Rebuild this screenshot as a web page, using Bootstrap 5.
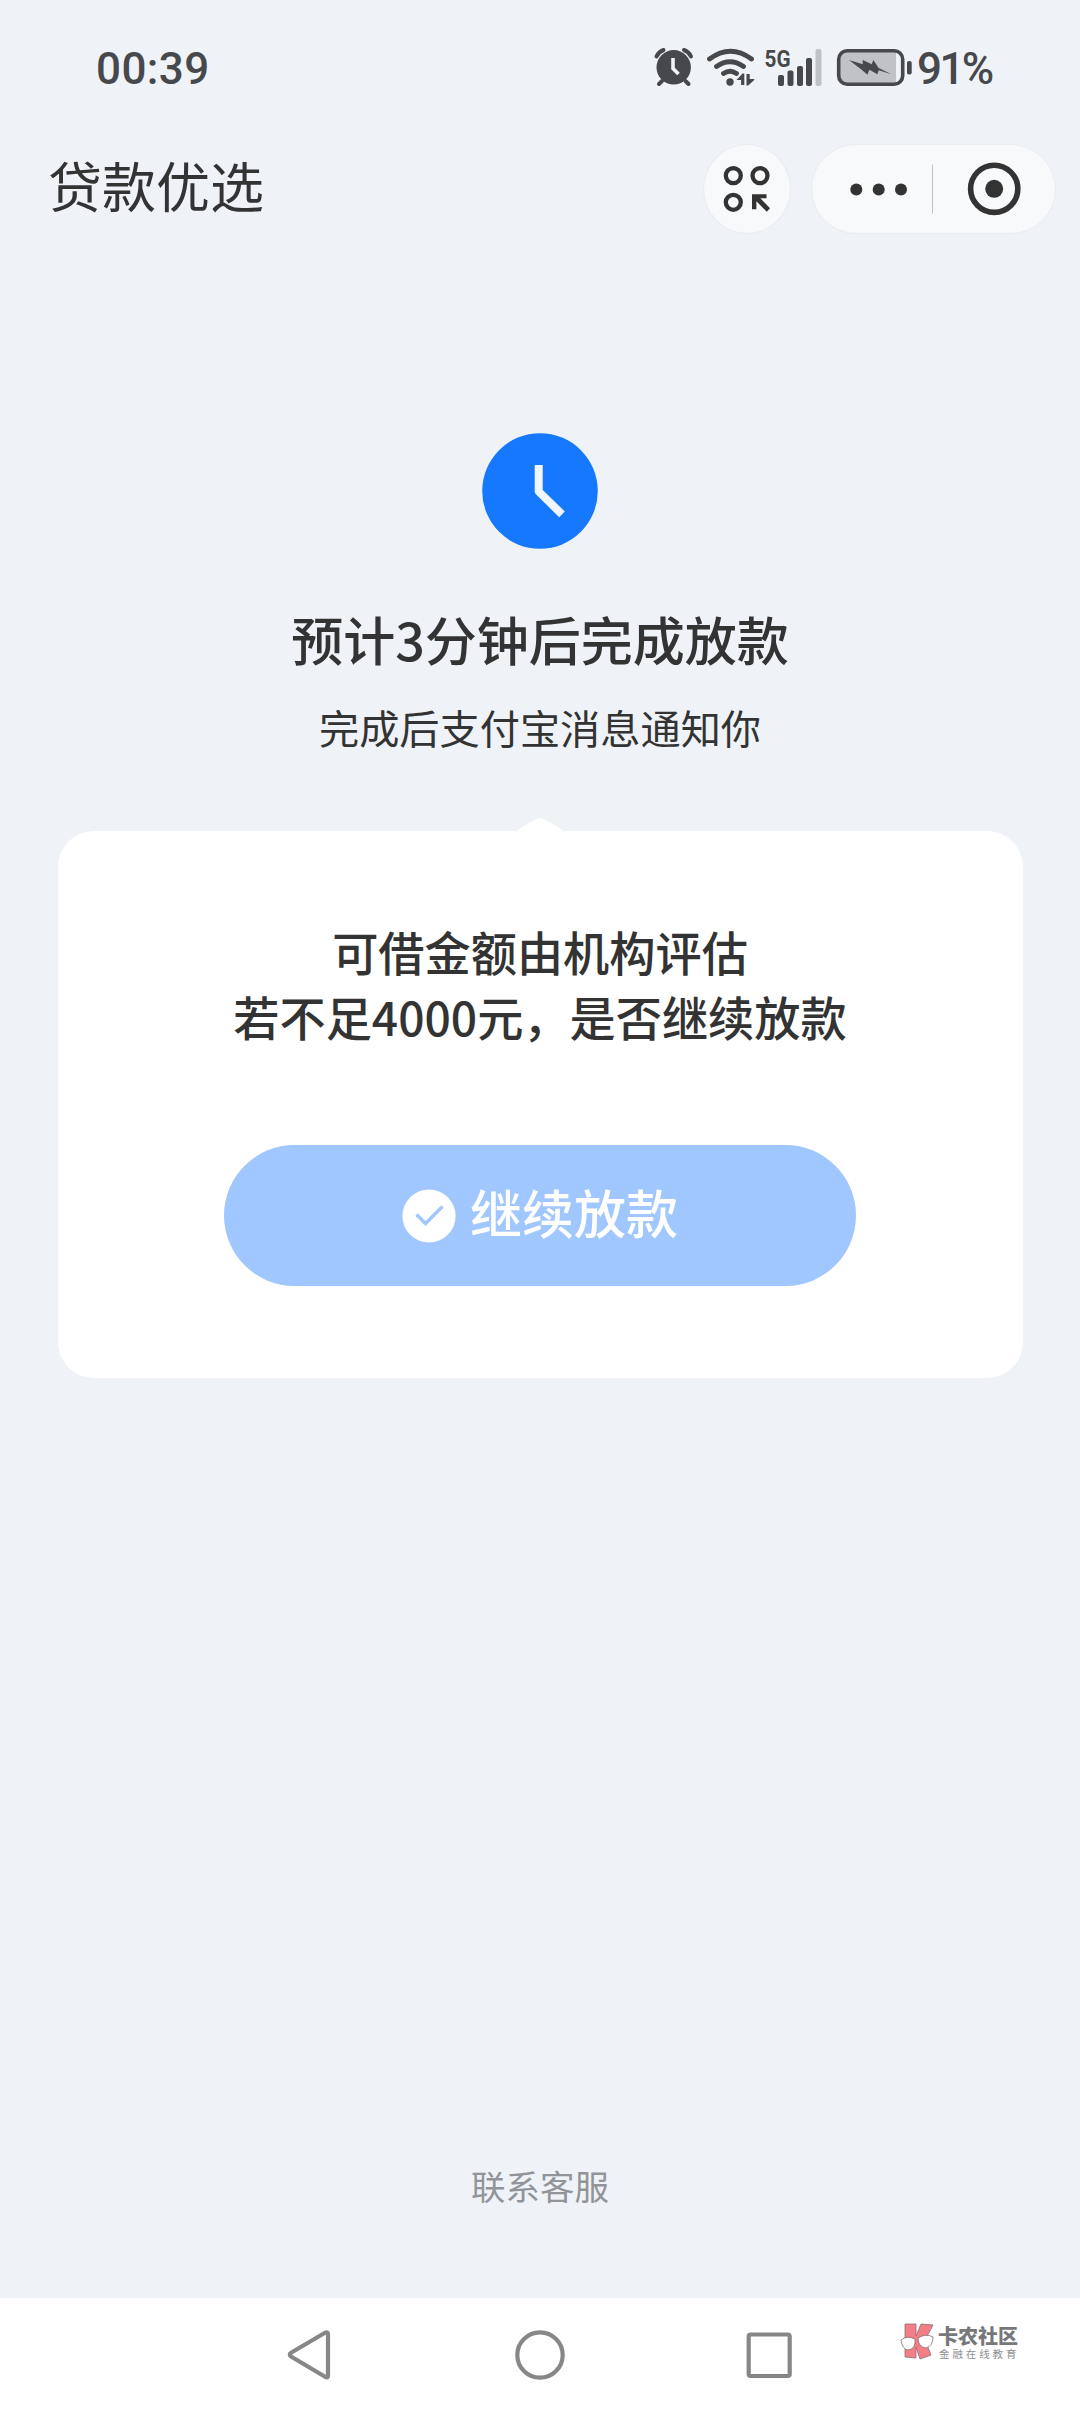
<!DOCTYPE html>
<html lang="zh-CN">
<head>
<meta charset="utf-8">
<meta name="viewport" content="width=device-width, initial-scale=1">
<title>贷款优选</title>
<link href="https://cdn.jsdelivr.net/npm/bootstrap@5.3.0/dist/css/bootstrap.min.css" rel="stylesheet">
<style>
  body { background: #eff3f8; color: #333; font-family: "Noto Sans CJK SC", sans-serif; overflow: hidden; }
  svg { display: block; flex: none; }
  .screen { width: 1080px; height: 2412px; }
  .status { height: 136px; padding: 0 87px 0 96px; color: #47484b; font: 500 44px/1 Roboto, sans-serif; letter-spacing: .4px; }
  .status .clock, .status .pct { padding-top: 2px; }
  .status .pct { letter-spacing: -2.6px; margin-left: 4px; width: 76px; white-space: nowrap; }
  .titlebar { height: 106px; padding: 0 24px 0 48px; }
  .titlebar h1 { font-size: 54px; line-height: 80px; font-weight: 400; color: #333; padding-bottom: 8px; }
  .pill { background: #f7f9fa; border: 1px solid #e9ebef; height: 90px; }
  .pill-round { width: 88px; margin-right: 20px; }
  .pill-wide { width: 245px; }
  .hero { padding-top: 191px; }
  .hero h2 { font-size: 52px; line-height: 76px; font-weight: 500; margin-top: 52px; }
  .hero p { font-size: 40.2px; line-height: 60px; margin-top: 20px; }
  .ask { margin: 74px 57.5px 0; height: 547px; border: 0; border-radius: 36px; padding-top: 87px; }
  .ask .notch { top: -14px; left: 456.5px; }
  .ask p { font-size: 46.2px; line-height: 65px; font-weight: 500; }
  .btn-go, .btn-go:disabled { width: 632px; height: 141px; margin-top: 97px; background: #a0c7ff; color: #fff; font-size: 52px; font-weight: 500; opacity: 1; border: 0; gap: 14px; }
  .btn-go span { line-height: 76px; margin-top: -8px; }
  .service { font-size: 34.5px; line-height: 50px; color: #929498; text-decoration: none; margin-bottom: 88px; }
  .sysnav { height: 114px; background: #fff; }
  .wm { left: 899px; top: 25px; gap: 3px; }
  .wm-name { font-size: 20px; line-height: 22px; font-weight: 900; color: #77787b; margin-top: 2px; }
  .wm-sub { font-size: 10.5px; line-height: 12px; letter-spacing: 2.9px; color: #8e8f92; margin-top: 1px; padding-left: 1px; white-space: nowrap; }
</style>
</head>
<body>
<div class="screen d-flex flex-column">
  <div class="status d-flex align-items-center justify-content-between">
    <span class="clock">00:39</span>
    <div class="d-flex align-items-center">
      <svg width="260" height="44" viewBox="653 46 260 44" fill="#47484b">
        <!-- alarm -->
        <circle cx="673.7" cy="67.3" r="17.2"/>
        <path d="M656.5 56.500a12 12 0 0 1 7-6.500M691 56.500a12 12 0 0 0-7-6.500M662 81l-3 3M685.500 81l3 3" fill="none" stroke="#47484b" stroke-width="4" stroke-linecap="round"/>
        <path d="M673 58v10.500l5.500 5.500" fill="none" stroke="#eff3f8" stroke-width="3.600"/>
        <!-- wifi -->
        <path d="M709.500 59Q730.500 43.500 751.500 59M716.500 66.500Q730 57 743.500 66.500M723.500 73.500Q730 69 736.500 73.500" fill="none" stroke="#47484b" stroke-width="4.800" stroke-linecap="round"/>
        <circle cx="730" cy="82" r="3.700"/>
        <path d="M736.500 80l6-6.500h1.800V85h-3.200v-5zM746.500 85.500V74h3.200v5h4.500v1l-6 5.500z"/>
        <!-- signal -->
        <rect x="778" y="75" width="6" height="11" rx="2"/>
        <rect x="787.500" y="70.500" width="6" height="15.500" rx="2"/>
        <rect x="797" y="66" width="6" height="20" rx="2"/>
        <rect x="806" y="58" width="6" height="28" rx="2"/>
        <rect x="815.500" y="49" width="6" height="37" rx="2" fill="#c0c2c5"/>
        <text x="764.500" y="66.800" font-size="24" font-weight="700" letter-spacing="0" textLength="26" lengthAdjust="spacingAndGlyphs">5G</text>
        <!-- battery -->
        <path d="M847 51H896V84H847Q839 84 839 76V59Q839 51 847 51z" fill="#c0c2c5"/>
        <rect x="838.700" y="50.700" width="64" height="33.600" rx="8.500" fill="none" stroke="#47484b" stroke-width="3.600"/>
        <rect x="907" y="61" width="4.700" height="13.500" rx="2"/>
        <path d="M849 60l13.700 4.300v-4.300l9 4.300l1.600-4.300l5.400 8l12.700 6.300l-12.700-4l-1.300 4l-8-4.600l-2 5l-5.700-5z"/>
      </svg>
      <span class="pct">91%</span>
    </div>
  </div>

  <header class="titlebar d-flex align-items-center">
    <h1 class="m-0 me-auto">贷款优选</h1>
    <div class="pill pill-round rounded-circle d-flex align-items-center justify-content-center">
      <svg width="48" height="48" viewBox="724 165 48 48">
        <g fill="none" stroke="#333" stroke-width="4.300"><circle cx="734.300" cy="175.600" r="7.500"/><circle cx="761" cy="175.600" r="7.500"/><circle cx="734.300" cy="202.300" r="7.500"/></g>
        <path d="M753 194.200h14.500v4h-6.200l9.700 10l-3.200 3.600l-10.400-10.500v8h-4.400z" fill="#333"/>
      </svg>
    </div>
    <div class="pill pill-wide rounded-pill">
      <svg width="243" height="88" viewBox="812 144.5 243 88" fill="#333">
        <circle cx="856.300" cy="189" r="6"/><circle cx="878.700" cy="189" r="6"/><circle cx="901" cy="189" r="6"/>
        <path d="M932.500 164v49" stroke="#bfc1c4"/>
        <circle cx="994.200" cy="188.300" r="23.600" fill="none" stroke="#333" stroke-width="5.600"/>
        <circle cx="994.200" cy="188.300" r="9"/>
      </svg>
    </div>
  </header>

  <main class="flex-grow-1 d-flex flex-column">
    <section class="hero d-flex flex-column align-items-center text-center">
      <svg width="116" height="116" viewBox="0 0 116 116"><circle cx="58" cy="58" r="57.800" fill="#1677ff"/><path d="M56.700 32V58.500L80 81.300" fill="none" stroke="#eff6ff" stroke-width="8" stroke-linejoin="round"/></svg>
      <h2 class="mb-0">预计3分钟后完成放款</h2>
      <p class="mb-0">完成后支付宝消息通知你</p>
    </section>

    <section class="ask card align-items-center text-center">
      <svg class="notch position-absolute" width="52" height="15" viewBox="0 0 52 15"><path d="M0 15Q4 14 8 10L21 3Q26-1 31 3L44 10Q48 14 52 15z" fill="#fff"/></svg>
      <p class="mb-0">可借金额由机构评估<br>若不足4000元，是否继续放款</p>
      <button type="button" class="btn btn-go rounded-pill d-flex align-items-center justify-content-center" disabled>
        <svg width="54" height="54" viewBox="0 0 54 54"><circle cx="27" cy="27" r="26.600" fill="#fff"/><path d="M14.500 25.500L23.500 34.500L40.500 17.500" fill="none" stroke="#a0c7ff" stroke-width="3.400"/></svg>
        <span>继续放款</span>
      </button>
    </section>

    <a class="service mt-auto align-self-center" href="#">联系客服</a>
  </main>

  <nav class="sysnav position-relative d-flex justify-content-center align-items-center">
    <svg width="510" height="54" viewBox="285 2328 510 54" fill="none" stroke="#878787" stroke-width="4.200" stroke-linejoin="round">
      <path d="M289.800 2354.500Q289.800 2353.500 291 2352.800L325.500 2332.500Q328 2332 328 2334V2376Q328 2378 325.500 2377L291 2356.500Q289.800 2355.500 289.800 2354.500z"/>
      <circle cx="540" cy="2355" r="22.700"/>
      <rect x="748.700" y="2334.500" width="41" height="41.500" rx="2"/>
    </svg>
    <div class="wm position-absolute d-flex">
      <svg width="36" height="38" viewBox="0 0 36 38" stroke="#8a6d70" stroke-width=".8">
        <path d="M6 1L17 1V13L22 1L34 2L26 17L32 32L21 36L17 24V35L6 34z" fill="#f47e88"/>
        <path d="M2 17Q8 12 16 16Q17 26 9 27Q3 26 2 17zM19 15Q27 10 34 14Q34 23 27 25Q19 24 19 15z" fill="#fff"/>
      </svg>
      <div class="d-flex flex-column">
        <span class="wm-name">卡农社区</span>
        <span class="wm-sub">金融在线教育</span>
      </div>
    </div>
  </nav>
</div>
<script src="https://cdn.jsdelivr.net/npm/bootstrap@5.3.0/dist/js/bootstrap.bundle.min.js"></script>
</body>
</html>
